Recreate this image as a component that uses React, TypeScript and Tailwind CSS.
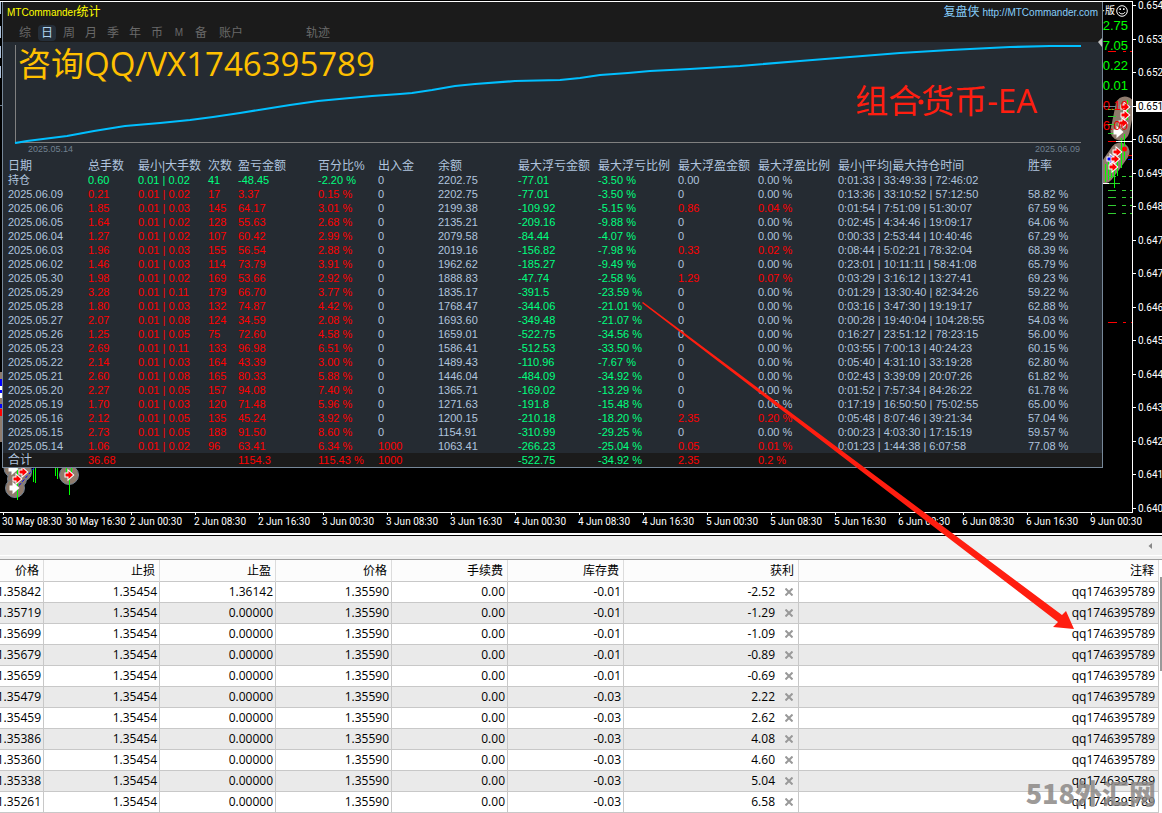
import React from 'react';

const TABS = ['综', '日', '周', '月', '季', '年', '币', 'M', '备'];

const STAT_COLUMNS = [
  { label: '日期',               width: 'w-[80px]' },
  { label: '总手数',             width: 'w-[50px]' },
  { label: '最小|大手数',        width: 'w-[70px]' },
  { label: '次数',               width: 'w-[30px]' },
  { label: '盈亏金额',           width: 'w-[80px]' },
  { label: '百分比%',            width: 'w-[60px]' },
  { label: '出入金',             width: 'w-[60px]' },
  { label: '余额',               width: 'w-[80px]' },
  { label: '最大浮亏金额',       width: 'w-[80px]' },
  { label: '最大浮亏比例',       width: 'w-[80px]' },
  { label: '最大浮盈金额',       width: 'w-[80px]' },
  { label: '最大浮盈比例',       width: 'w-[80px]' },
  { label: '最小|平均|最大持仓时间', width: 'w-[190px]' },
  { label: '胜率',               width: '' },
];

const STATS: string[][] = [
  ['持仓', '0.60', '0.01 | 0.02', '41', '-48.45', '-2.20 %', '0', '2202.75', '-77.01', '-3.50 %', '0.00', '0.00 %', '0:01:33 | 33:49:33 | 72:46:02', ''],
  ['2025.06.09', '0.21', '0.01 | 0.02', '17', '3.37', '0.15 %', '0', '2202.75', '-77.01', '-3.50 %', '0', '0.00 %', '0:13:36 | 33:10:52 | 57:12:50', '58.82 %'],
  ['2025.06.06', '1.85', '0.01 | 0.03', '145', '64.17', '3.01 %', '0', '2199.38', '-109.92', '-5.15 %', '0.86', '0.04 %', '0:01:54 | 7:51:09 | 51:30:07', '67.59 %'],
  ['2025.06.05', '1.64', '0.01 | 0.02', '128', '55.63', '2.68 %', '0', '2135.21', '-209.16', '-9.88 %', '0', '0.00 %', '0:02:45 | 4:34:46 | 19:09:17', '64.06 %'],
  ['2025.06.04', '1.27', '0.01 | 0.02', '107', '60.42', '2.99 %', '0', '2079.58', '-84.44', '-4.07 %', '0', '0.00 %', '0:00:33 | 2:53:44 | 10:40:46', '67.29 %'],
  ['2025.06.03', '1.96', '0.01 | 0.03', '155', '56.54', '2.88 %', '0', '2019.16', '-156.82', '-7.98 %', '0.33', '0.02 %', '0:08:44 | 5:02:21 | 78:32:04', '68.39 %'],
  ['2025.06.02', '1.46', '0.01 | 0.03', '114', '73.79', '3.91 %', '0', '1962.62', '-185.27', '-9.49 %', '0', '0.00 %', '0:23:01 | 10:11:11 | 58:41:08', '65.79 %'],
  ['2025.05.30', '1.98', '0.01 | 0.02', '169', '53.66', '2.92 %', '0', '1888.83', '-47.74', '-2.58 %', '1.29', '0.07 %', '0:03:29 | 3:16:12 | 13:27:41', '69.23 %'],
  ['2025.05.29', '3.28', '0.01 | 0.11', '179', '66.70', '3.77 %', '0', '1835.17', '-391.5', '-23.59 %', '0', '0.00 %', '0:01:29 | 13:30:40 | 82:34:26', '59.22 %'],
  ['2025.05.28', '1.80', '0.01 | 0.03', '132', '74.87', '4.42 %', '0', '1768.47', '-344.06', '-21.01 %', '0', '0.00 %', '0:03:16 | 3:47:30 | 19:19:17', '62.88 %'],
  ['2025.05.27', '2.07', '0.01 | 0.08', '124', '34.59', '2.08 %', '0', '1693.60', '-349.48', '-21.07 %', '0', '0.00 %', '0:00:28 | 19:40:04 | 104:28:55', '54.03 %'],
  ['2025.05.26', '1.25', '0.01 | 0.05', '75', '72.60', '4.58 %', '0', '1659.01', '-522.75', '-34.56 %', '0', '0.00 %', '0:16:27 | 23:51:12 | 78:23:15', '56.00 %'],
  ['2025.05.23', '2.69', '0.01 | 0.11', '133', '96.98', '6.51 %', '0', '1586.41', '-512.53', '-33.50 %', '0', '0.00 %', '0:03:55 | 7:00:13 | 40:24:23', '60.15 %'],
  ['2025.05.22', '2.14', '0.01 | 0.03', '164', '43.39', '3.00 %', '0', '1489.43', '-110.96', '-7.67 %', '0', '0.00 %', '0:05:40 | 4:31:10 | 33:19:28', '62.80 %'],
  ['2025.05.21', '2.60', '0.01 | 0.08', '165', '80.33', '5.88 %', '0', '1446.04', '-484.09', '-34.92 %', '0', '0.00 %', '0:02:43 | 3:39:09 | 20:07:26', '61.82 %'],
  ['2025.05.20', '2.27', '0.01 | 0.05', '157', '94.08', '7.40 %', '0', '1365.71', '-169.02', '-13.29 %', '0', '0.00 %', '0:01:52 | 7:57:34 | 84:26:22', '61.78 %'],
  ['2025.05.19', '1.70', '0.01 | 0.03', '120', '71.48', '5.96 %', '0', '1271.63', '-191.8', '-15.48 %', '0', '0.00 %', '0:17:19 | 16:50:50 | 75:02:55', '65.00 %'],
  ['2025.05.16', '2.12', '0.01 | 0.05', '135', '45.24', '3.92 %', '0', '1200.15', '-210.18', '-18.20 %', '2.35', '0.20 %', '0:05:48 | 8:07:46 | 39:21:34', '57.04 %'],
  ['2025.05.15', '2.73', '0.01 | 0.05', '188', '91.50', '8.60 %', '0', '1154.91', '-310.99', '-29.25 %', '0', '0.00 %', '0:00:23 | 4:03:30 | 17:15:19', '59.57 %'],
  ['2025.05.14', '1.06', '0.01 | 0.02', '96', '63.41', '6.34 %', '1000', '1063.41', '-266.23', '-25.04 %', '0.05', '0.01 %', '0:01:23 | 1:44:38 | 6:07:58', '77.08 %'],
];

const TOTALS = ['合计', '36.68', '', '', '1154.3', '115.43 %', '1000', '', '-522.75', '-34.92 %', '2.35', '0.2 %', '', ''];

const PRICES = [
  '0.6544', '0.6535', '0.6526', '0.6516', '0.6507', '0.6498', '0.6488', '0.6479',
  '0.6470', '0.6461', '0.6451', '0.6442', '0.6433', '0.6423', '0.6414', '0.6405',
];

const TIMES = [
  '30 May 08:30', '30 May 16:30', '2 Jun 00:30', '2 Jun 08:30', '2 Jun 16:30', '3 Jun 00:30',
  '3 Jun 08:30', '3 Jun 16:30', '4 Jun 00:30', '4 Jun 08:30', '4 Jun 16:30', '5 Jun 00:30',
  '5 Jun 08:30', '5 Jun 16:30', '6 Jun 00:30', '6 Jun 08:30', '6 Jun 16:30', '9 Jun 00:30',
];

const SIDE_VALUES = [
  { value: '2.75', color: 'text-[#00ff00]' },
  { value: '7.05', color: 'text-[#00ff00]' },
  { value: '0.22', color: 'text-[#00ff00]' },
  { value: '0.01', color: 'text-[#00ff00]' },
  { value: '0.10', color: 'text-[#f00000]' },
  { value: '6.00', color: 'text-[#f00000]' },
];

const ORDER_COLUMNS = ['价格', '止损', '止盈', '价格', '手续费', '库存费'];

const ORDERS = [
  { open: '1.35842', tp: '1.36142', swap: '-0.01', profit: '-2.52' },
  { open: '1.35719', tp: '0.00000', swap: '-0.01', profit: '-1.29' },
  { open: '1.35699', tp: '0.00000', swap: '-0.01', profit: '-1.09' },
  { open: '1.35679', tp: '0.00000', swap: '-0.01', profit: '-0.89' },
  { open: '1.35659', tp: '0.00000', swap: '-0.01', profit: '-0.69' },
  { open: '1.35479', tp: '0.00000', swap: '-0.03', profit: '2.22' },
  { open: '1.35459', tp: '0.00000', swap: '-0.03', profit: '2.62' },
  { open: '1.35386', tp: '0.00000', swap: '-0.03', profit: '4.08' },
  { open: '1.35360', tp: '0.00000', swap: '-0.03', profit: '4.60' },
  { open: '1.35338', tp: '0.00000', swap: '-0.03', profit: '5.04' },
  { open: '1.35261', tp: '0.00000', swap: '-0.03', profit: '6.58' },
];

// Losses are green and gains red, plain columns stay light blue.
function statColor(col: number, row: string[]): string {
  const value = row[col];
  if (col === 0 || col === 7 || col > 11) return 'text-[#b0c4de]';
  if (col === 8 || col === 9) return 'text-[#00ff7f]';
  if (col === 6) return value === '0' ? 'text-[#b0c4de]' : 'text-[#ff0000]';
  if (col > 9) return parseFloat(value) === 0 ? 'text-[#b0c4de]' : 'text-[#ff0000]';
  return row[4].startsWith('-') ? 'text-[#00ff7f]' : 'text-[#ff0000]';
}

const TradeArrow: React.FC<{ x: number; y: number; fill?: string }> = ({ x, y, fill = '#ff0000' }) => (
  <path
    transform={`translate(${x} ${y})`}
    d="M-3.5 -1.5H-0.500V-4L4 0L-0.500 4V1.5H-3.5Z"
    fill={fill}
    stroke="#ffffff"
    strokeWidth="2"
    paintOrder="stroke"
  />
);

const SideMarkers = () => (
  <svg className="absolute inset-0" width="30" height="330" viewBox="0 0 30 330">
    <g stroke="#8f7b6d" strokeWidth="19" strokeLinecap="round" fill="none">
      <path d="M22 104L17 129" />
      <path d="M17 150L8 163L1 172" />
    </g>
    <path d="M0 104.500H29" stroke="#708090" shapeRendering="crispEdges" />
    <g stroke="#00ff00" strokeWidth="1" shapeRendering="crispEdges">
      <path d="M24.500 98V118M18.500 136V166M21.500 132V158M14.500 148V174M11.500 160V186M8.500 166V176M5.500 160V178M2.500 162V180" />
    </g>
    <g stroke="#32cd32" strokeWidth="1" shapeRendering="crispEdges">
      <path d="M5 107.500H13M5 114.500H13M5 122.500H13M5 131.500H13M5 174.500H13M5 181.500H17M5 188.500H13M5 195.500H13M5 203.500H13M5 211.500H13" />
      <path d="M19 174.500H23M26 174.500H29M19 188.500H23M27 188.500H29M19 195.500H23M27 195.500H29M19 203.500H23M27 203.500H29M19 211.500H23M27 211.500H29" />
    </g>
    <g stroke="#ff0000" strokeWidth="1" shapeRendering="crispEdges">
      <path d="M5 49.500H13M20 49.500H23M27 49.500H29M5 139.500H13M25 153.500H29M5 320.500H14M20 320.500H23M28 320.500H29" />
    </g>
    <path d="M13 139.500H29M0 181.500H6" stroke="#ffffff" shapeRendering="crispEdges" />
    <path d="M25 157.500H29" stroke="#0000ff" shapeRendering="crispEdges" />
    <TradeArrow x={22} y={105} />
    <TradeArrow x={22} y={113} />
    <TradeArrow x={20} y={121} />
    <TradeArrow x={15} y={130} fill="#ffffff" />
    <TradeArrow x={14} y={150} />
    <TradeArrow x={8} y={157} fill="#0000ff" />
    <TradeArrow x={12} y={157} />
    <TradeArrow x={10} y={165} />
    <circle cx="21.500" cy="147" r="2.500" fill="#ff0000" />
  </svg>
);

const LowerMarkers = () => (
  <svg className="block" width="110" height="44" viewBox="0 0 110 44">
    <g fill="#8f7b6d" stroke="#708090" strokeWidth="1">
      <circle cx="14" cy="0" r="10" />
      <circle cx="22" cy="4" r="9.500" />
      <circle cx="17" cy="11" r="9.500" />
      <circle cx="15" cy="20" r="9.500" />
      <circle cx="69" cy="7" r="9.500" />
    </g>
    <path d="M17.500 0V32M33.500 0V14M35.500 0V15M55.500 0V8M57.500 0V11M66.500 0V4M71.500 0V4M69.500 8V27" stroke="#00ff00" shapeRendering="crispEdges" />
    <path d="M34 0L17 20" stroke="#0000ff" strokeDasharray="3 2" />
    <TradeArrow x={13} y={1} fill="#ffffff" />
    <TradeArrow x={23} y={4} />
    <TradeArrow x={17} y={11} />
    <TradeArrow x={14} y={20} fill="#ffffff" />
    <TradeArrow x={69} y={7} />
  </svg>
);

const BalanceChart = () => (
  <div className="relative">
    <svg className="block h-[102px] w-full" viewBox="3 42 1099 102" preserveAspectRatio="none">
      <path d="M15.500 45V142.500H1081" stroke="#808080" strokeWidth="1" fill="none" shapeRendering="crispEdges" />
      <polyline
        points="15,143 27,141 67,136 94,131 125,126 160,123 190,120 213,117 240,113 265,109 290,105 318,101 350,98 372,96 400,94 412,93 432,90 455,86 475,84 515,81 560,80 580,78 600,75 628,73 650,71 690,69 740,66 800,61 850,57 900,53 950,50 1010,47 1050,46 1081,46"
        fill="none"
        stroke="#00bfff"
        strokeWidth="2.200"
      />
      <circle cx="921" cy="102" r="2.500" fill="#ff1e10" />
    </svg>
    <div className="flex h-[15px] items-start justify-between pr-[22px] pl-[25px] text-[9px] leading-[11px] text-[#708090]">
      <span>2025.05.14</span>
      <span>2025.06.09</span>
    </div>
    <p className="absolute top-0 left-[15px] font-['Open_Sans','Noto_Sans_CJK_SC',sans-serif] text-[33px] leading-[44px] whitespace-nowrap text-[#ffc000]">
      咨询QQ/VX1746395789
    </p>
    <p className="absolute top-[37px] right-[65px] font-['Open_Sans','Noto_Sans_CJK_SC',sans-serif] text-[33px] leading-[44px] whitespace-nowrap text-[#ff1e10]">
      组合货币-EA
    </p>
  </div>
);

const StatsTable = () => (
  <table className="w-full table-fixed border-collapse text-left text-[11px] leading-[14px] whitespace-nowrap">
    <thead>
      <tr className="h-[14px] text-[12px] text-[#b0c4de]">
        {STAT_COLUMNS.map(({ label, width }, i) => (
          <th key={label} className={`p-0 font-normal ${width} ${i === 0 ? 'w-[85px] pl-[5px]' : ''}`}>{label}</th>
        ))}
      </tr>
    </thead>
    <tbody>
      {STATS.map(row => (
        <tr key={row[0]} className="h-[14px]">
          {row.map((value, i) => (
            <td key={i} className={`p-0 ${i === 0 ? 'pl-[5px]' : ''} ${statColor(i, row)}`}>{value}</td>
          ))}
        </tr>
      ))}
    </tbody>
    <tfoot>
      <tr className="h-[14px] bg-[#1b1b1b]">
        {TOTALS.map((value, i) => (
          <td key={i} className={`p-0 ${i === 0 ? 'pl-[5px] text-[12px]' : ''} ${statColor(i, TOTALS)}`}>{value}</td>
        ))}
      </tr>
    </tfoot>
  </table>
);

const StatsPanel: React.FC<{ tab: string; onTab: (tab: string) => void }> = ({ tab, onTab }) => (
  <div className="min-w-0 flex-1 border-x border-b border-[#778899] bg-[#252b32]">
    {/* Title bar and period tabs */}
    <div className="h-[40px] bg-[#1b1b1b]">
      <div className="flex h-[20px] items-center justify-between px-1 text-[10px]">
        <h1 className="text-[#ffff00]">
          MTCommander<span className="text-[12px]">统计</span>
        </h1>
        <a href="http://MTCommander.com" className="text-[#87cefa]">
          <span className="text-[12px]">复盘侠</span> http://MTCommander.com
        </a>
      </div>
      <div className="flex h-[20px] items-end pb-px pl-[11px] text-[12px] leading-4 text-[#696969]">
        {TABS.map(name => (
          <button
            key={name}
            onClick={() => onTab(name)}
            className={`mx-[2px] h-4 w-[18px] rounded-sm ${name === 'M' ? 'text-[10px]' : ''} ${tab === name ? 'bg-[#252f3a] text-[#b0d4f0]' : ''}`}
          >
            {name}
          </button>
        ))}
        <button className="ml-[7px]">账户</button>
        <button className="ml-[63px]">轨迹</button>
      </div>
    </div>
    <BalanceChart />
    <StatsTable />
  </div>
);

const PriceAxis = () => (
  <div className="w-[29px] shrink-0 overflow-hidden font-[Roboto,sans-serif] text-[10px] text-white">
    {PRICES.map((price, i) => (
      <div key={price} className="flex h-[34px] items-start even:h-[33px]">
        <span className="mt-1 h-px w-[3px] shrink-0 bg-white" />
        <span className={`-mt-px h-[11px] leading-[11px] ${i === 3 ? 'bg-white px-[2px] text-black' : 'ml-[2px]'}`}>{price}</span>
      </div>
    ))}
  </div>
);

const ChartWindow = () => {
  const [tab, setTab] = React.useState('日');

  return (
    <section className="overflow-hidden bg-black pt-px">
      <div className="flex h-[532px]">
        <div className="flex min-w-0 flex-1 flex-col">
          <div className="border-t border-r border-b border-white">
            <div className="flex">
              <svg className="block shrink-0" width="2" height="465" viewBox="0 0 2 465">
                <path d="M0 0V12M0 24V36M0 44V56M0 64V76" stroke="#b0c4de" strokeWidth="2" />
                <path d="M0 103.500H2" stroke="#708090" />
                <path d="M0 370V440" stroke="#8f7b6d" strokeWidth="4" />
                <path d="M0 377V384M0 388V391M0 402V406" stroke="#0000ff" strokeWidth="4" />
                <path d="M0 384V388M0 391V396" stroke="#ffffff" strokeWidth="4" />
                <path d="M0 407V414" stroke="#ff0000" strokeWidth="4" />
              </svg>
              <StatsPanel tab={tab} onTab={setTab} />

              {/* Account values along the right edge of the chart */}
              <div className="relative flex w-[29px] shrink-0 flex-col items-end overflow-hidden pr-1 text-[13px] leading-5">
                <SideMarkers />
                <div className="flex h-[14px] items-start gap-px pt-[3px] text-[10px] leading-[12px] whitespace-nowrap text-white">
                  <span>·版</span>
                  <svg width="12" height="12" viewBox="0 0 12 12" fill="none" stroke="#ffffff">
                    <circle cx="6" cy="6" r="5.300" />
                    <path d="M3 7C4 9.500 8 9.500 9 7" />
                    <path d="M4.200 3.300V5M7.800 3.300V5" strokeWidth="1.500" />
                  </svg>
                </div>
                {SIDE_VALUES.map(({ value, color }) => (
                  <span key={value} className={`z-10 ${color}`}>{value}</span>
                ))}
              </div>
            </div>
            <LowerMarkers />
          </div>

          {/* Time axis */}
          <div className="flex pl-[2px] font-[Roboto,sans-serif] text-[10px] leading-[14px] text-white">
            {TIMES.map(time => (
              <div key={time} className="w-16 shrink-0 whitespace-nowrap">
                <span className="ml-px block h-[2px] w-px bg-white" />
                {time}
              </div>
            ))}
          </div>
        </div>
        <PriceAxis />
      </div>
    </section>
  );
};

const OrdersTable = () => (
  <section className="flex bg-[#f0f0f0] font-['Open_Sans','Noto_Sans_CJK_SC',sans-serif]">
    <table className="w-full table-fixed border-separate border-spacing-0 text-right text-[12px] leading-5 text-black">
      <colgroup>
        <col className="w-[44px]" />
        <col className="w-[116px]" />
        <col className="w-[116px]" />
        <col className="w-[116px]" />
        <col className="w-[116px]" />
        <col className="w-[116px]" />
        <col className="w-[175px]" />
        <col />
      </colgroup>
      <thead>
        <tr className="bg-[#fcfcfc]">
          {ORDER_COLUMNS.map((label, i) => (
            <th key={i} className="h-[22px] border-r border-b border-[#c8c8c8] border-r-[#dcdcdc] p-0 pr-1 font-normal">{label}</th>
          ))}
          <th className="border-r border-b border-[#c8c8c8] border-r-[#dcdcdc] p-0 pr-1 font-normal">获利</th>
          <th className="border-r border-b border-[#c8c8c8] border-r-[#dcdcdc] p-0 pr-1 font-normal">注释</th>
        </tr>
      </thead>
      <tbody>
        {ORDERS.map(({ open, tp, swap, profit }) => (
          <tr key={open} className="bg-white even:bg-[#eaeaea] [&>td]:h-[21px] [&>td]:border-r [&>td]:border-b [&>td]:border-[#c8c8c8] [&>td]:p-0 [&>td]:pr-[2px]">
            <td>
              <div className="flex justify-end">{open}</div>
            </td>
            <td>1.35454</td>
            <td>{tp}</td>
            <td>1.35590</td>
            <td>0.00</td>
            <td>{swap}</td>
            <td>
              <div className="flex items-center justify-end gap-[10px] pr-[3px]">
                {profit}
                <button aria-label="平仓">
                  <svg className="block" width="8" height="8" viewBox="0 0 8 8" stroke="#999999" strokeWidth="2">
                    <path d="M0.500 0.500L7.500 7.500M7.500 0.500L0.500 7.500" />
                  </svg>
                </button>
              </div>
            </td>
            <td>
              <div className="pr-px">qq1746395789</div>
            </td>
          </tr>
        ))}
      </tbody>
    </table>
    <div className="w-[3px] shrink-0 bg-white pt-[17px]">
      <div className="ml-px h-[94px] border border-[#999999] bg-[#dddddd]" />
    </div>
  </section>
);

export default function App() {
  return (
    <main className="relative overflow-hidden bg-black font-['Liberation_Sans','Noto_Sans_CJK_SC',sans-serif]">
      <ChartWindow />
      <div className="h-[2px] bg-white" />
      <div className="mt-px flex h-5 items-center justify-end border-b border-white bg-[#f0f0f0] pr-[10px]">
        <svg width="4" height="6" viewBox="0 0 4 6" fill="#888888">
          <path d="M4 0V6L0.500 3Z" />
        </svg>
      </div>
      <div className="h-1 border-b border-[#a0a0a0] bg-[#f0f0f0]" />
      <OrdersTable />

      {/* Callout from the balance rows to the order comment */}
      <svg className="pointer-events-none absolute top-0 left-0" width="1162" height="813" viewBox="0 0 1162 813">
        <path d="M643 302L948 530L1062 615L1066 611L1074 629L1053 627L1058 622L938 530L642 303Z" fill="#ff1e10" />
        <path d="M1098 42L1102 38V47Z" fill="#c0c0c0" />
      </svg>
      <p className="pointer-events-none absolute right-[6px] bottom-1 font-['Noto_Sans_CJK_SC',sans-serif] text-[27px] leading-8 font-black whitespace-nowrap text-[#8c8886]/85">
        518外汇网
      </p>
    </main>
  );
}
